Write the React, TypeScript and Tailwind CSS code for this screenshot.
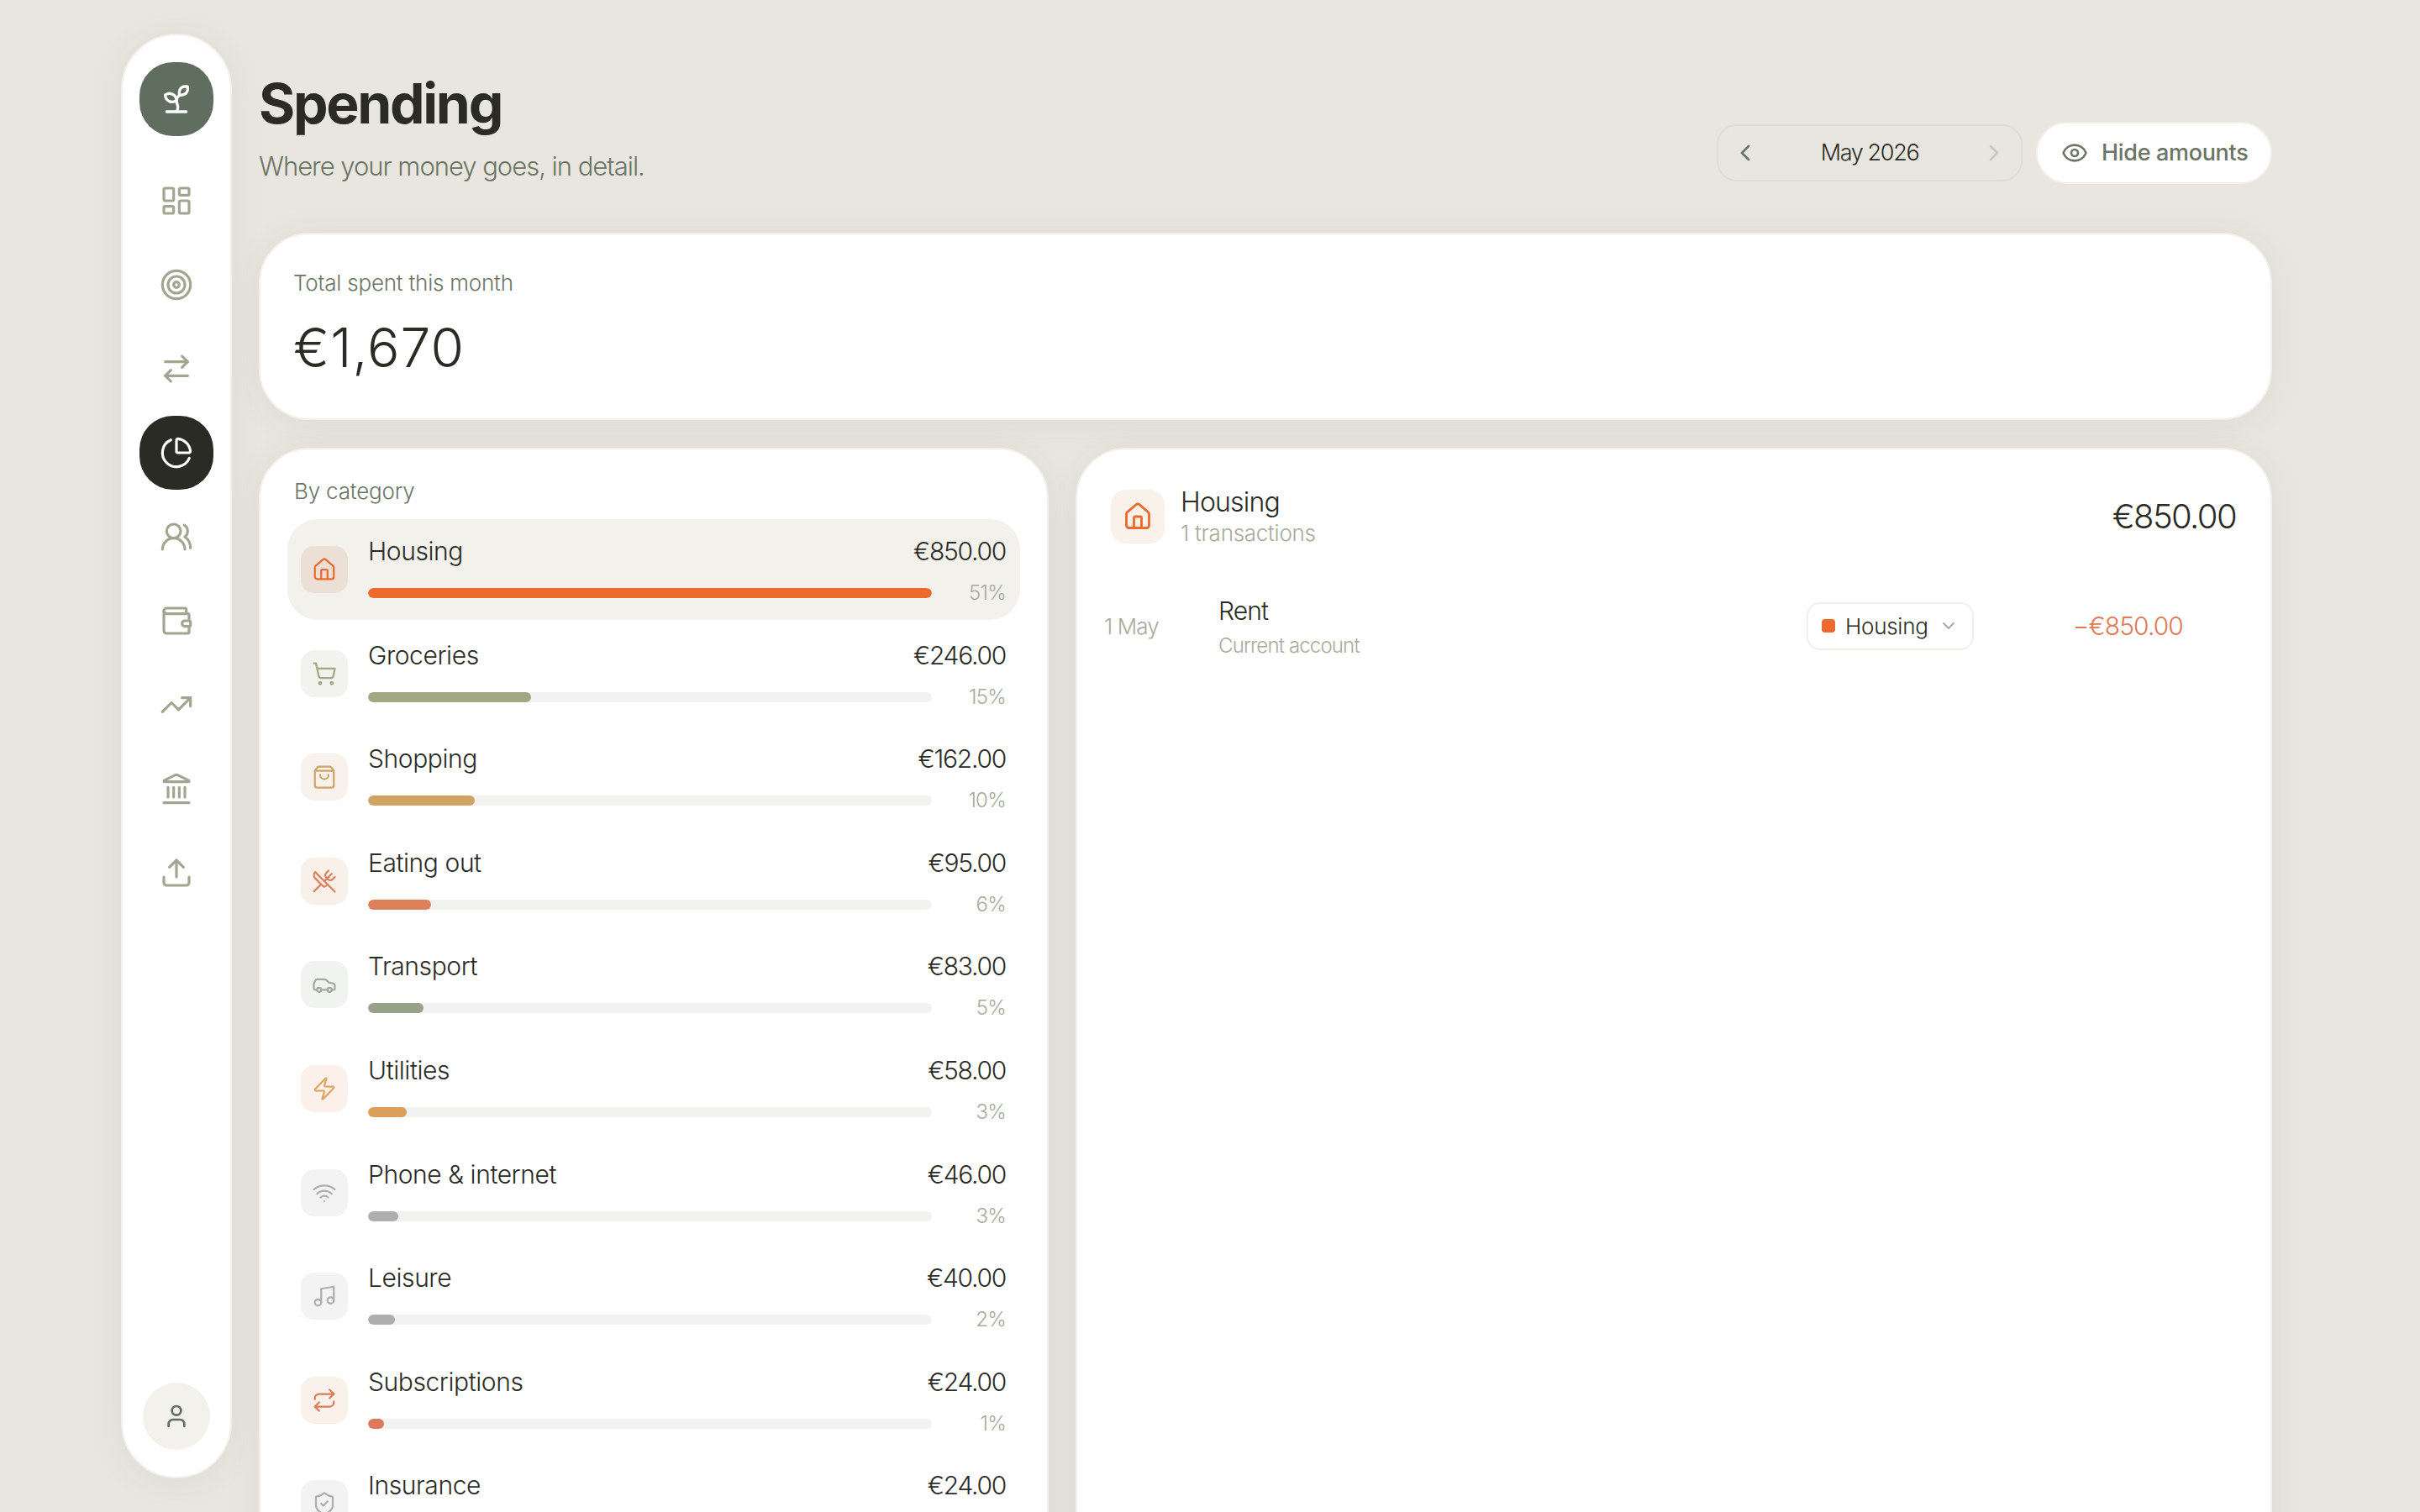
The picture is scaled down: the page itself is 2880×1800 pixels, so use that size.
import {
  ArrowRightLeft, Car, ChartPie, ChevronDown, ChevronLeft, ChevronRight, Eye, House, Landmark, LayoutDashboard, Music,
  Repeat, ShieldCheck, ShoppingBag, ShoppingCart, Sprout, Target, TrendingUp, Upload, User, UsersRound, UtensilsCrossed, Wallet, Wifi, Zap,
} from "lucide-react"

const nav = [
  { icon: LayoutDashboard },
  { icon: Target },
  { icon: ArrowRightLeft },
  { icon: ChartPie, active: true },
  { icon: UsersRound },
  { icon: Wallet },
  { icon: TrendingUp },
  { icon: Landmark },
  { icon: Upload },
]

const categories = [
  { name: "Housing", amount: "€850.00", pct: "51%", width: "100%", icon: House, bar: "bg-[#ec6a2d]", tile: "bg-[#ecdfd5]", tint: "text-[#ec6a2d]", selected: true },
  { name: "Groceries", amount: "€246.00", pct: "15%", width: "28.9%", icon: ShoppingCart, bar: "bg-[#a3a883]", tile: "bg-[#f2f3ef]", tint: "text-[#a3a883]" },
  { name: "Shopping", amount: "€162.00", pct: "10%", width: "19%", icon: ShoppingBag, bar: "bg-[#cfa463]", tile: "bg-[#f9f1eb]", tint: "text-[#cfa463]" },
  { name: "Eating out", amount: "€95.00", pct: "6%", width: "11.2%", icon: UtensilsCrossed, bar: "bg-[#dd815c]", tile: "bg-[#faf0ea]", tint: "text-[#dd815c]" },
  { name: "Transport", amount: "€83.00", pct: "5%", width: "9.8%", icon: Car, bar: "bg-[#98a288]", tile: "bg-[#f1f3f1]", tint: "text-[#a4a99a]" },
  { name: "Utilities", amount: "€58.00", pct: "3%", width: "6.8%", icon: Zap, bar: "bg-[#dc9e5a]", tile: "bg-[#fbf1ea]", tint: "text-[#dca562]" },
  { name: "Phone & internet", amount: "€46.00", pct: "3%", width: "5.4%", icon: Wifi, bar: "bg-[#aeaeae]", tile: "bg-[#f2f3f2]", tint: "text-[#aeaeae]" },
  { name: "Leisure", amount: "€40.00", pct: "2%", width: "4.7%", icon: Music, bar: "bg-[#aeaeae]", tile: "bg-[#f2f3f2]", tint: "text-[#aeaeae]" },
  { name: "Subscriptions", amount: "€24.00", pct: "1%", width: "2.8%", icon: Repeat, bar: "bg-[#dd7a5a]", tile: "bg-[#f9f1ea]", tint: "text-[#dd7a5a]" },
  { name: "Insurance", amount: "€24.00", pct: "1%", width: "2.8%", icon: ShieldCheck, bar: "bg-[#aeaeae]", tile: "bg-[#f2f3f2]", tint: "text-[#aeaeae]" },
]

const cardClass = "rounded-[60px] border-2 border-[#f1f0ea] bg-white shadow-[0_4px_40px_rgba(70,70,50,0.07)]"

function Sidebar() {
  return (
    <aside className="flex h-[1720px] w-[132px] shrink-0 flex-col items-center rounded-[66px] border-2 border-[#f1f0ea] bg-white pt-[32px] pb-[32px] shadow-[0_4px_40px_rgba(70,70,50,0.07)]">
      <div className="mb-[33px] flex h-[88px] w-[88px] items-center justify-center rounded-[40px] bg-[#5f6e5e]">
        <Sprout size={40} strokeWidth={2} className="text-white" />
      </div>
      <nav className="flex flex-col gap-[12px]">
        {nav.map((item, i) => {
          const Icon = item.icon
          return (
            <div
              key={i}
              className={item.active
                ? "flex h-[88px] w-[88px] items-center justify-center rounded-[40px] bg-[#2a2b25] text-white"
                : "flex h-[88px] w-[88px] items-center justify-center text-[#a0a690]"}
            >
              <Icon size={40} strokeWidth={1.9} />
            </div>
          )
        })}
      </nav>
      <div className="mt-auto flex h-[80px] w-[80px] items-center justify-center rounded-full bg-[#f3f1ec] text-[#5f6e5e]">
        <User size={32} strokeWidth={2} />
      </div>
    </aside>
  )
}

function Header() {
  return (
    <header className="flex items-end justify-between">
      <div>
        <h1 className="text-[66px] leading-[80px] font-bold tracking-[-0.035em] text-[#2a2b25]">Spending</h1>
        <p className="mt-[15px] text-[31px] leading-[40px] tracking-[-0.033em] text-[#6b7565]">Where your money goes, in detail.</p>
      </div>
      <div className="-mb-px flex items-center gap-[16px]">
        <div className="flex h-[68px] w-[364px] items-center justify-between rounded-[24px] border-2 border-[#dfded6] px-[16px]">
          <ChevronLeft size={32} strokeWidth={2} className="text-[#6b7565]" />
          <span className="text-[27px] tracking-[-0.05em] text-[#2a2b25]">May 2026</span>
          <ChevronRight size={32} strokeWidth={2} className="text-[#c6c7bd]" />
        </div>
        <button className="flex h-[74px] w-[281px] items-center gap-[16px] rounded-full border-2 border-[#f1f0ea] bg-white pl-[28px]">
          <Eye size={32} strokeWidth={2} className="text-[#6b7565]" />
          <span className="text-[27px] font-medium tracking-[-0.012em] text-[#6b7565]">Hide amounts</span>
        </button>
      </div>
    </header>
  )
}

function CategoryRow({ item }: { item: (typeof categories)[number] }) {
  const Icon = item.icon
  return (
    <div className={`flex items-center gap-[24px] rounded-[36px] pt-[16px] pr-[17px] pb-[16px] pl-[16px] ${item.selected ? "bg-[#f3f1ec]" : ""}`}>
      <div className={`flex h-[56px] w-[56px] shrink-0 items-center justify-center rounded-[16px] ${item.tile} ${item.tint}`}>
        <Icon size={30} strokeWidth={1.8} />
      </div>
      <div className="min-w-0 flex-1">
        <div className="flex items-center justify-between text-[#2a2b25]">
          <span className="text-[30px] leading-[44px] tracking-[-0.014em]">{item.name}</span>
          <span className="text-[30px] leading-[44px] tracking-[-0.042em]">{item.amount}</span>
        </div>
        <div className="mt-[12px] flex h-[32px] items-center">
          <div className="h-[12px] flex-1 overflow-hidden rounded-full bg-[#f2f3f1]">
            <div className={`h-full rounded-full ${item.bar}`} style={{ width: item.width }} />
          </div>
          <span className="w-[88px] text-right text-[24px] leading-[32px] tracking-[-0.03em] text-[#a8aa9c]">{item.pct}</span>
        </div>
      </div>
    </div>
  )
}

function DetailPanel() {
  return (
    <section className={`${cardClass} h-[1400px] min-w-0 flex-1 rounded-b-none`}>
      <div className="flex items-center justify-between pt-[43px] pr-[41px] pl-[40px]">
        <div className="flex items-center gap-[19px]">
          <div className="flex h-[64px] w-[64px] items-center justify-center rounded-[18px] bg-[#f9f1ea] text-[#ec6a2d]">
            <House size={36} strokeWidth={1.9} />
          </div>
          <div>
            <div className="text-[32px] leading-[40px] tracking-[-0.025em] text-[#2a2b25]">Housing</div>
            <div className="text-[26px] leading-[34px] tracking-[-0.01em] text-[#a8aa9c]">1 transactions</div>
          </div>
        </div>
        <div className="text-[40px] leading-[50px] tracking-[-0.04em] text-[#2a2b25]">€850.00</div>
      </div>
      <div className="mt-[55px] flex items-center pr-[104px] pl-[32px]">
        <span className="w-[136px] shrink-0 text-[26px] tracking-[-0.035em] text-[#a8aa9c]">1 May</span>
        <div className="-mb-[8px] flex-1">
          <div className="text-[30px] leading-[40px] tracking-[-0.03em] text-[#2a2b25]">Rent</div>
          <div className="text-[24px] leading-[44px] tracking-[-0.035em] text-[#a8aa9c]">Current account</div>
        </div>
        <div className="flex h-[57px] w-[199px] items-center rounded-[16px] border-2 border-[#f0efea] pl-[16px]">
          <span className="h-[16px] w-[16px] rounded-[4px] bg-[#ec6a2d]" />
          <span className="ml-[12px] text-[26px] tracking-[-0.01em] text-[#2a2b25]">Housing</span>
          <ChevronDown size={24} strokeWidth={2} className="ml-[12px] text-[#a8aa9c]" />
        </div>
        <span className="w-[249px] text-right text-[30px] tracking-[-0.03em] text-[#e07a55]">−€850.00</span>
      </div>
    </section>
  )
}

export default function App() {
  return (
    <div className="flex h-screen gap-[32px] overflow-hidden bg-[#e8e6df] pt-[40px] pr-[176px] pl-[144px] font-['Inter',sans-serif] font-[350]">
      <Sidebar />
      <main className="min-w-0 flex-1 pt-[43px]">
        <Header />
        <div className={`${cardClass} mt-[59px] h-[223px] pt-[40px] pl-[39px]`}>
          <div className="text-[26px] leading-[36px] tracking-[-0.008em] text-[#6b7565]">Total spent this month</div>
          <div className="mt-[23px] text-[64px] leading-[72px] tracking-[0.017em] text-[#2a2b25]">€1,670</div>
        </div>
        <div className="mt-[33px] flex gap-[32px]">
          <section className={`${cardClass} h-[1400px] w-[940px] shrink-0 rounded-b-none pt-[32px] pr-[32px] pl-[32px]`}>
            <div className="mb-[15px] ml-[8px] text-[26px] leading-[36px] tracking-[-0.007em] text-[#6b7565]">By category</div>
            <div className="flex flex-col gap-[3.6px]">
              {categories.map((c) => (
                <CategoryRow key={c.name} item={c} />
              ))}
            </div>
          </section>
          <DetailPanel />
        </div>
      </main>
    </div>
  )
}
